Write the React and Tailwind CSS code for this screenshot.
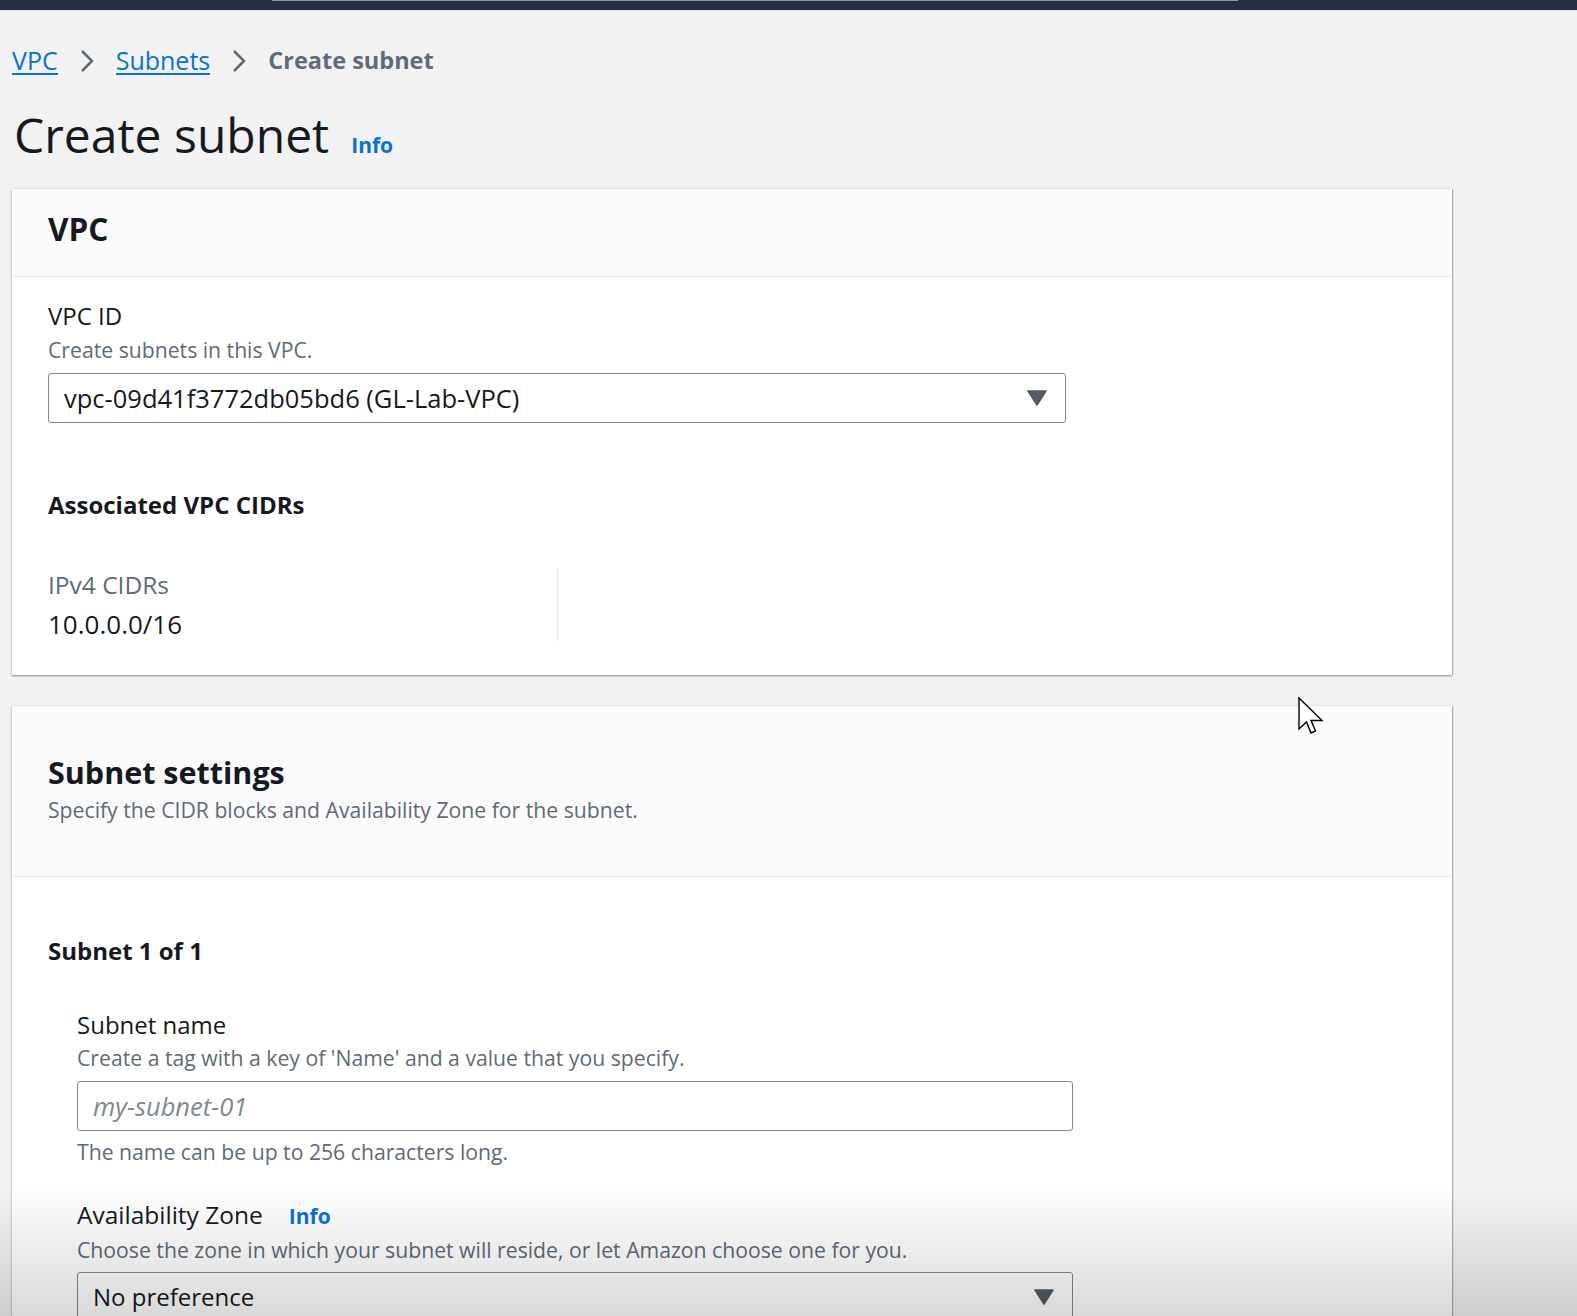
import React from 'react';

// --- small pieces ---

const Chevron = () => (
  <svg width="16" height="26" viewBox="0 0 16 26" className="mx-[21px]" aria-hidden="true">
    <path d="M3 3 L13 13 L3 23" fill="none" stroke="#5f6b7a" strokeWidth="2.6" />
  </svg>
);

const Caret = () => (
  <svg width="20" height="16" viewBox="0 0 20 16" aria-hidden="true">
    <path d="M1 1 H19 L10 15 Z" fill="#545b64" stroke="#545b64" strokeWidth="1.5" strokeLinejoin="round" />
  </svg>
);

const SelectBox = ({ value, className = '' }) => (
  <div className={`flex h-[50px] items-center justify-between rounded-[3px] border border-[#7d8998] bg-white pl-[15px] pr-[18px] ${className}`}>
    <span className="text-[24px] text-[#16191f]">{value}</span>
    <Caret />
  </div>
);

const Label = ({ children }) => (
  <div className="text-[24px] leading-[30px] text-[#16191f]">{children}</div>
);

const Hint = ({ children, className = '' }) => (
  <div className={`text-[21.2px] leading-[28px] text-[#5f6b7a] ${className}`}>{children}</div>
);

const Info = ({ className = '' }) => (
  <span className={`font-bold text-[#0972d3] ${className}`}>Info</span>
);

// --- cards ---

const VpcCard = () => (
  <div className="bg-white shadow-[0_1px_2px_rgba(0,28,36,0.45),1px_0_1px_rgba(0,28,36,0.2)]">
    <div className="h-[88px] border-b border-[#eaeded] bg-[#fafafa] px-[36px] pt-[22px]">
      <h2 className="text-[31.5px] font-bold leading-[36px] text-[#16191f]">VPC</h2>
    </div>
    <div className="px-[36px] pb-[33px] pt-[24px]">
      <Label>VPC ID</Label>
      <Hint className="mt-[5px]">Create subnets in this VPC.</Hint>
      <SelectBox className="mt-[9px] w-[1018px]" value={<span className="text-[25.5px]">vpc-09d41f3772db05bd6 (GL-Lab-VPC)</span>} />

      <h3 className="mt-[67px] text-[24px] font-bold leading-[30px] text-[#16191f]">Associated VPC CIDRs</h3>

      <div className="mt-[48px] flex">
        <div className="w-[510px] border-r border-[#e9ebed] pb-[3px] pt-[2px]">
          <div className="text-[24.5px] leading-[30px] text-[#5f6b7a]">IPv4 CIDRs</div>
          <div className="mt-[9px] text-[26px] leading-[30px] text-[#16191f]">10.0.0.0/16</div>
        </div>
      </div>
    </div>
  </div>
);

const SubnetCard = () => (
  <div className="bg-white shadow-[0_1px_2px_rgba(0,28,36,0.45),1px_0_1px_rgba(0,28,36,0.2)]">
    <div className="h-[171px] border-b border-[#eaeded] bg-[#fafafa] px-[36px] pt-[48px]">
      <h2 className="text-[30.5px] font-bold leading-[36px] text-[#16191f]">Subnet settings</h2>
      <Hint className="mt-[6px]">Specify the CIDR blocks and Availability Zone for the subnet.</Hint>
    </div>
    <div className="px-[36px] pb-[40px] pt-[59px]">
      <h3 className="text-[24px] font-bold leading-[30px] text-[#16191f]">Subnet 1 of 1</h3>

      <div className="mt-[44px] pl-[29px]">
        <Label>Subnet name</Label>
        <Hint className="mt-[4px]">Create a tag with a key of 'Name' and a value that you specify.</Hint>
        <div className="mt-[9px] flex h-[50px] w-[996px] items-center rounded-[3px] border border-[#7d8998] bg-white pl-[15px]">
          <span className="text-[25.5px] italic text-[#7d8998]">my-subnet-01</span>
        </div>
        <Hint className="mt-[7px]">The name can be up to 256 characters long.</Hint>

        <div className="mt-[34px] flex items-baseline gap-[26px]">
          <Label>
            <span className="text-[24.5px]">Availability Zone</span>
          </Label>
          <Info className="text-[21px]" />
        </div>
        <Hint className="mt-[3px]">Choose the zone in which your subnet will reside, or let Amazon choose one for you.</Hint>
        <SelectBox className="mt-[8px] w-[996px]" value="No preference" />
      </div>
    </div>
  </div>
);

// --- mouse pointer captured in the shot ---
const Pointer = () => (
  <svg width="26" height="40" viewBox="0 0 26 40" className="absolute left-[1298px] top-[697px]" aria-hidden="true">
    <path
      d="M1 1 L1 32 L8.5 25 L13 36 L17.5 34 L13 23.5 L24 23.5 Z"
      fill="#ffffff"
      stroke="#000000"
      strokeWidth="1.4"
      strokeLinejoin="miter"
    />
  </svg>
);

export default function App() {
  return (
    <div className="relative h-[1316px] overflow-hidden bg-[#f2f2f2] font-['Open_Sans','Noto_Sans',sans-serif]">
      {/* top nav strip */}
      <div className="h-[10px] bg-[#232f3e]">
        <div className="ml-[272px] h-px w-[966px] bg-[#8a949f]" />
      </div>
      <div className="h-px bg-[#dfe3e8]" />

      <div className="px-[12px]">
        {/* breadcrumbs */}
        <nav className="mt-[35px] flex h-[30px] items-center text-[25px]">
          <a className="border-b-2 border-[#0972d3] leading-[26px] text-[#0972d3]">VPC</a>
          <Chevron />
          <a className="border-b-2 border-[#0972d3] leading-[26px] text-[#0972d3]">Subnets</a>
          <Chevron />
          <span className="text-[23.5px] font-bold text-[#5f6b7a]">Create subnet</span>
        </nav>

        {/* page title */}
        <div className="mt-[31px] flex items-baseline gap-[22px] pl-[2px]">
          <h1 className="text-[48px] leading-[56px] text-[#16191f]">Create subnet</h1>
          <Info className="text-[21px]" />
        </div>

        <div className="mt-[26px] flex w-[1440px] flex-col gap-[31px]">
          <VpcCard />
          <SubnetCard />
        </div>
      </div>

      <Pointer />

      {/* dark fade along the bottom of the capture */}
      <div className="pointer-events-none absolute inset-x-0 bottom-0 h-[130px] bg-gradient-to-b from-transparent to-[rgba(0,0,0,0.15)]" />
    </div>
  );
}
